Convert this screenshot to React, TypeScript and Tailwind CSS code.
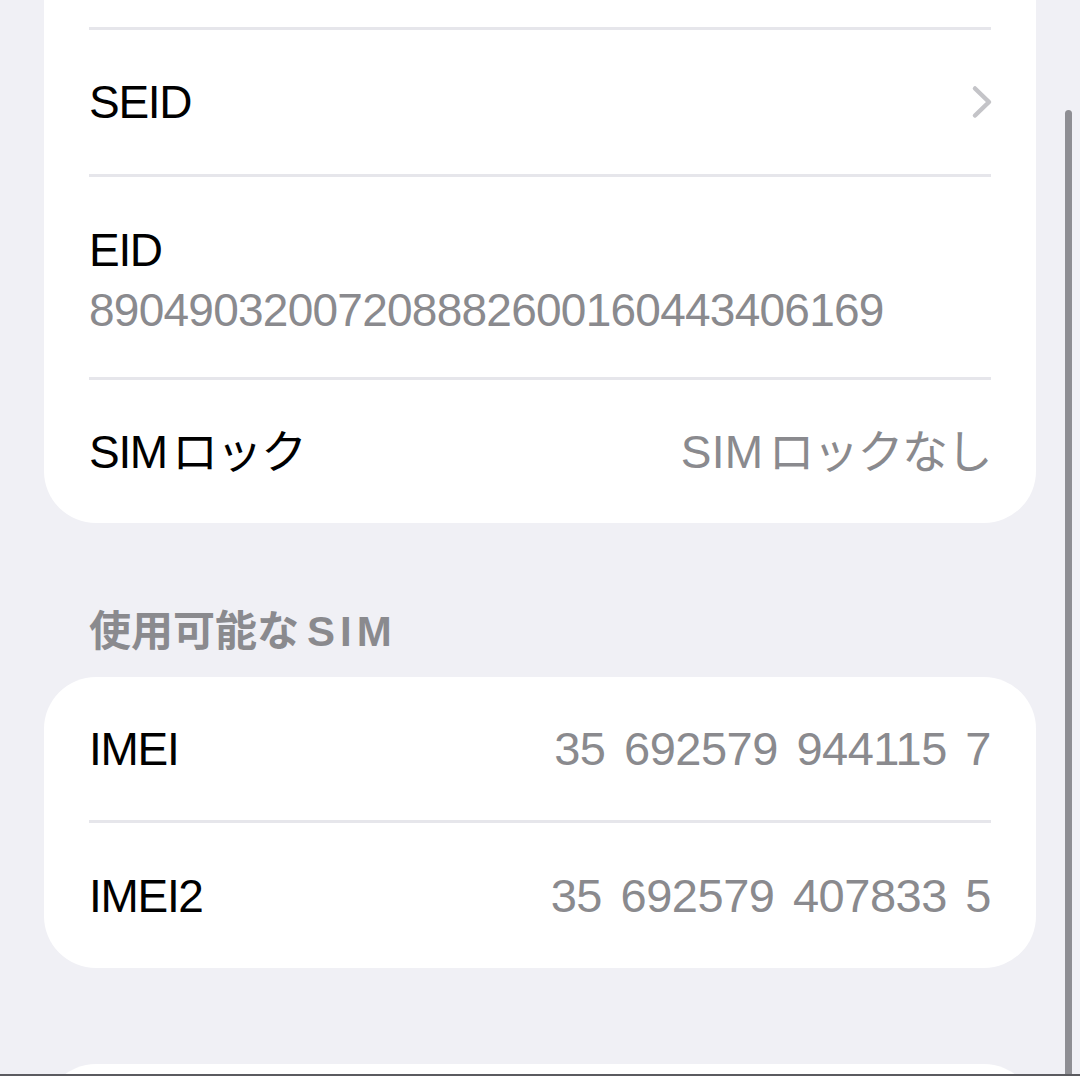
import React from "react";

const font = "font-['Liberation_Sans','Noto_Sans_CJK_JP',sans-serif]";

const Separator = () => <div className="h-[3px] bg-[#e6e6eb]" />;

const Chevron = () => (
  <svg width="22" height="34" viewBox="0 0 22 34" fill="none">
    <path
      d="M4 3.5 L18 17 L4 30.5"
      stroke="#c4c4c8"
      strokeWidth="4.5"
      strokeLinecap="round"
      strokeLinejoin="round"
    />
  </svg>
);

// latin + kana with the small gap iOS puts between them
const SimLock = ({ suffix = "" }: { suffix?: string }) => (
  <>
    SIM<span className="ml-[5px] tracking-[-1.5px]">ロック{suffix}</span>
  </>
);

const Row = ({
  label,
  value,
  height,
  chevron,
  valueClass = "text-[46px] tracking-[0.3px]",
}: {
  label: React.ReactNode;
  value?: React.ReactNode;
  height: string;
  chevron?: boolean;
  valueClass?: string;
}) => (
  <div className={`flex items-center justify-between ${height}`}>
    <span className="text-[46px] leading-[56px] tracking-[-1.3px] text-black">
      {label}
    </span>
    {value && (
      <span className={`leading-[56px] text-[#8a8a8e] ${valueClass}`}>
        {value}
      </span>
    )}
    {chevron && (
      <span className="-mr-[2px] flex items-center">
        <Chevron />
      </span>
    )}
  </div>
);

const imeiClass = "text-[47px] tracking-[-0.5px] [word-spacing:6px]";

export default function App() {
  return (
    <div className={`relative h-[1076px] w-[1080px] overflow-hidden bg-[#f0f0f5] ${font}`}>
      <div className="ml-[44px] w-[992px]">
        {/* first group, scrolled so its top is off screen */}
        <div className="-mt-[118px] rounded-b-[52px] bg-white px-[45px]">
          <div className="h-[145px]" />
          <Separator />
          <Row label="SEID" height="h-[144px]" chevron />
          <Separator />
          <div className="flex h-[200px] flex-col justify-center pt-[6px]">
            <span className="text-[46px] leading-[60px] tracking-[-1.3px] text-black">
              EID
            </span>
            <span className="text-[46px] leading-[60px] tracking-[-0.75px] text-[#8a8a8e]">
              89049032007208882600160443406169
            </span>
          </div>
          <Separator />
          <Row
            label={<SimLock />}
            value={<SimLock suffix="なし" />}
            height="h-[143px]"
          />
        </div>

        <div className="flex h-[154px] items-center px-[45px] pt-[64px]">
          <span className="text-[42px] font-semibold leading-[48px] text-[#8a8a8e]">
            使用可能な<span className="ml-[8px] tracking-[5px]">SIM</span>
          </span>
        </div>

        <div className="rounded-[52px] bg-white px-[45px]">
          <Row
            label="IMEI"
            value="35 692579 944115 7"
            height="h-[143px]"
            valueClass={imeiClass}
          />
          <Separator />
          <Row
            label="IMEI2"
            value="35 692579 407833 5"
            height="h-[145px]"
            valueClass={imeiClass}
          />
        </div>

        <div className="mt-[96px] h-[200px] rounded-t-[52px] bg-white" />
      </div>

      {/* scroll indicator */}
      <div className="absolute left-[1065px] top-[110px] h-[1000px] w-[7px] rounded-full bg-[#8e8e93]" />
      {/* dark edge at the bottom of the capture */}
      <div className="absolute bottom-0 left-0 h-[2px] w-full bg-[#5b5b60]" />
    </div>
  );
}
